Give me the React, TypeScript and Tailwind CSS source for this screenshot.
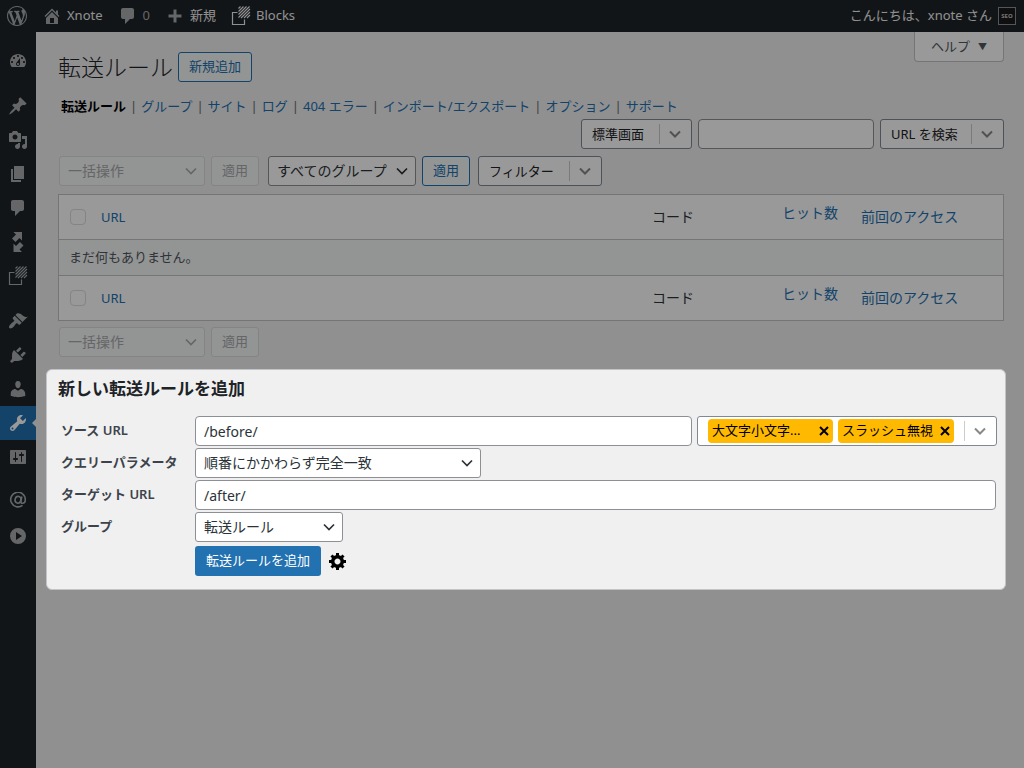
import type { ReactNode } from 'react'

const paths = {
  wordpress:
    'M20 10c0-5.51-4.49-10-10-10C4.48 0 0 4.49 0 10c0 5.52 4.48 10 10 10 5.51 0 10-4.48 10-10zM7.78 15.37L4.37 6.22c.55-.02 1.17-.08 1.17-.08.5-.06.44-1.13-.06-1.11 0 0-1.45.11-2.37.11-.18 0-.37 0-.58-.01C4.12 2.69 6.87 1.11 10 1.11c2.33 0 4.45.87 6.05 2.34-.68-.11-1.65.39-1.65 1.58 0 .74.45 1.36.9 2.1.35.61.55 1.36.55 2.46 0 1.49-1.4 5-1.4 5l-3.03-8.37c.54-.02.82-.17.82-.17.5-.05.44-1.25-.06-1.22 0 0-1.44.12-2.38.12-.87 0-2.33-.12-2.33-.12-.5-.03-.56 1.2-.06 1.22l.92.08 1.26 3.41zM17.41 10c.24-.64.74-1.87.43-4.25.7 1.29 1.05 2.71 1.05 4.25 0 3.29-1.73 6.24-4.4 7.78.97-2.59 1.94-5.2 2.92-7.78zM6.1 18.09C3.12 16.65 1.11 13.53 1.11 10c0-1.3.23-2.48.72-3.59C3.25 10.3 4.67 14.2 6.1 18.09zm4.03-6.63l2.58 6.98c-.86.29-1.76.45-2.71.45-.79 0-1.57-.11-2.29-.33.81-2.38 1.62-4.74 2.42-7.1z',
  home: 'M16 8.5l1.53 1.53-1.06 1.06L10 4.6l-6.47 6.49-1.06-1.06L10 2.5l4 4v-2h2v4zm-6-2.46l6 5.99V18H4v-5.97zM12 17v-5H8v5h4z',
  comments: 'M5 2h9c1.1 0 2 .9 2 2v7c0 1.1-.9 2-2 2h-2l-5 5v-5H5c-1.1 0-2-.9-2-2V4c0-1.1.9-2 2-2z',
  plus: 'M16.5 8.5v3h-5v5h-3v-5h-5v-3h5v-5h3v5z',
  dashboard:
    'M3.76 16h12.48c1.1-1.37 1.76-3.11 1.76-5 0-4.42-3.58-8-8-8s-8 3.58-8 8c0 1.89.66 3.63 1.76 5zM10 4c.55 0 1 .45 1 1s-.45 1-1 1-1-.45-1-1 .45-1 1-1zM6 6c.55 0 1 .45 1 1s-.45 1-1 1-1-.45-1-1 .45-1 1-1zm8 0c.55 0 1 .45 1 1s-.45 1-1 1-1-.45-1-1 .45-1 1-1zm-5.37 5.55L12 7v6c0 1.1-.9 2-2 2s-2-.9-2-2c0-.57.24-1.08.63-1.45zM4 10c.55 0 1 .45 1 1s-.45 1-1 1-1-.45-1-1 .45-1 1-1zm12 0c.55 0 1 .45 1 1s-.45 1-1 1-1-.45-1-1 .45-1 1-1zm-5 3c0-.55-.45-1-1-1s-1 .45-1 1 .45 1 1 1 1-.45 1-1z',
  post: 'M10.44 3.02l1.82-1.82 6.36 6.35-1.83 1.82c-1.05-.68-2.48-.57-3.41.36l-.75.75c-.92.93-1.04 2.35-.35 3.41l-1.83 1.82-2.41-2.41-2.8 2.79c-.42.42-3.38 2.71-3.8 2.29s1.86-3.39 2.28-3.81l2.79-2.79L4.1 9.36l1.83-1.82c1.05.69 2.48.57 3.4-.36l.75-.75c.93-.92 1.05-2.35.36-3.41z',
  media:
    'M13 11V4c0-.55-.45-1-1-1h-1.67L9 1H5L3.67 3H2c-.55 0-1 .45-1 1v7c0 .55.45 1 1 1h10c.55 0 1-.45 1-1zM7 4.5c1.38 0 2.5 1.12 2.5 2.5S8.38 9.5 7 9.5 4.5 8.38 4.5 7 5.62 4.5 7 4.5zM14 6h5v10.5c0 1.38-1.12 2.5-2.5 2.5S14 17.88 14 16.5s1.12-2.5 2.5-2.5c.17 0 .34.02.5.05V9h-3V6zm-4 8.05V13h2v3.5c0 1.38-1.12 2.5-2.5 2.5S7 17.88 7 16.5 8.12 14 9.5 14c.17 0 .34.02.5.05z',
  page: 'M6 15V2h10v13H6zm-1 1h8v2H3V5h2v11z',
  transfer: 'M5.5 0H14v8.5l-2.5-2.5-4 4L4 6.500l4-4zM5.5 20v-8.5L8 14l4-4 3.500 3.500-4 4 2.500 2.500z',
  appearance:
    'M14.48 11.06L7.41 3.99l1.5-1.5c.5-.56 2.3-.47 3.51.32 1.21.8 1.43 1.28 2.91 2.1 1.18.64 2.45 1.26 4.45.85zm-.71.71L6.7 4.7 4.93 6.47c-.39.39-.39 1.02 0 1.41l1.06 1.06c.39.39.39 1.03 0 1.42-.6.6-1.43 1.11-2.21 1.69-.35.26-.7.53-1.01.84C1.43 14.23.4 16.08 1.4 17.07c.99 1 2.84-.03 4.18-1.36.31-.31.58-.66.85-1.02.57-.78 1.08-1.61 1.69-2.21.39-.39 1.02-.39 1.41 0l1.06 1.06c.39.39 1.02.39 1.41 0z',
  plugins:
    'M13.11 4.36L9.87 7.6 8 5.73l3.24-3.24c.35-.34 1.05-.2 1.56.32.52.51.66 1.21.31 1.55zm-8 1.77l.91-1.12 9.01 9.01-1.19.84c-.71.71-2.63 1.16-3.82 1.16H6.14L4.9 17.26c-.59.59-1.54.59-2.12 0-.59-.58-.59-1.53 0-2.12l1.24-1.24v-3.88c0-1.13.4-3.19 1.09-3.89zm7.26 3.97l3.24-3.24c.34-.35 1.04-.21 1.55.31.52.51.66 1.21.31 1.55l-3.24 3.25z',
  users:
    'M10 9.25c-2.27 0-2.73-3.44-2.73-3.44C7 4.02 7.82 2 9.97 2c2.16 0 2.98 2.02 2.71 3.81 0 0-.41 3.44-2.68 3.44zm0 2.57L12.72 10c2.39 0 4.52 2.33 4.52 4.53v2.49s-3.65 1.13-7.24 1.13c-3.65 0-7.24-1.13-7.24-1.13v-2.49c0-2.25 1.94-4.48 4.47-4.48z',
  tools:
    'M16.68 9.77c-1.34 1.34-3.3 1.67-4.95.99l-5.41 6.52c-.99.99-2.59.99-3.58 0s-.99-2.59 0-3.57l6.52-5.42c-.68-1.65-.35-3.61.99-4.95 1.28-1.28 3.12-1.62 4.72-1.06l-2.89 2.89 2.82 2.82 2.86-2.87c.53 1.58.18 3.39-1.08 4.65zM3.81 16.21c.4.39 1.04.39 1.43 0 .4-.4.4-1.04 0-1.43-.39-.4-1.03-.4-1.43 0-.39.39-.39 1.03 0 1.43z',
  settings:
    'M18 16V4c0-.55-.45-1-1-1H3c-.55 0-1 .45-1 1v12c0 .55.45 1 1 1h14c.55 0 1-.45 1-1zM8 11h1c.55 0 1 .45 1 1s-.45 1-1 1H8v1.5c0 .28-.22.5-.5.5s-.5-.22-.5-.5V13H6c-.55 0-1-.45-1-1s.45-1 1-1h1V5.5c0-.28.22-.5.5-.5s.5.22.5.5V11zm5-2h-1c-.55 0-1-.45-1-1s.45-1 1-1h1V5.5c0-.28.22-.5.5-.5s.5.22.5.5V7h1c.55 0 1 .45 1 1s-.45 1-1 1h-1v5.5c0 .28-.22.5-.5.5s-.5-.22-.5-.5V9z',
  collapse: 'M10 2a8 8 0 1 0 0 16a8 8 0 0 0 0-16zM8 6l6 4-6 4z',
  gear: 'M18 12h-2.18c-.17.7-.44 1.35-.81 1.93l1.54 1.54-2.1 2.1-1.54-1.54c-.58.36-1.23.63-1.91.79V19H8v-2.18c-.68-.16-1.33-.43-1.91-.79l-1.54 1.54-2.12-2.12 1.54-1.54c-.36-.58-.63-1.23-.79-1.91H1V9.03h2.17c.16-.7.44-1.35.8-1.94L2.43 5.55l2.1-2.1 1.54 1.54c.58-.37 1.24-.64 1.93-.81V2h3v2.18c.68.16 1.33.43 1.91.79l1.54-1.54 2.12 2.12-1.54 1.54c.36.59.64 1.24.8 1.94H18V12zm-8.5 1.5c1.66 0 3-1.34 3-3s-1.34-3-3-3-3 1.34-3 3 1.34 3 3 3z',
}

type IconName = keyof typeof paths

const Icon = ({ name, className = 'size-5' }: { name: IconName; className?: string }) => {
  return (
    <svg viewBox="0 0 20 20" className={className} fill="currentColor" fillRule="evenodd" aria-hidden="true">
      <path d={paths[name]} />
    </svg>
  )
}

const BlocksIcon = () => {
  return (
    <svg viewBox="0 0 20 20" className="size-5" fill="none" stroke="currentColor" aria-hidden="true">
      <path d="M6.5 6.5h-5v12h12v-5" strokeWidth="1.2" />
      <path
        d="M7.5 2.5l2-2M7.5 5.5l5-5M7.5 8.5l8-8M7.5 11.5l11-11M10 12l9-9M13 12l6-6M16 12l3-3"
        strokeWidth="1.1"
      />
    </svg>
  )
}

const AtIcon = () => {
  return (
    <svg viewBox="0 0 20 20" className="size-5" fill="none" stroke="currentColor" strokeWidth="1.6" aria-hidden="true">
      <path d="M14.5 13.3A7.3 7.3 0 1 1 17.3 7.500c0 2.400-1.300 3.800-2.900 3.800-1.200 0-1.700-.8-1.400-2.200L13.800 4.500" />
      <ellipse cx="10" cy="7.8" rx="2.9" ry="3.400" transform="rotate(15 10 7.8)" />
    </svg>
  )
}

const Chevron = ({ className }: { className?: string }) => {
  return (
    <svg
      viewBox="0 0 16 16"
      className={`pointer-events-none absolute size-4 ${className ?? ''}`}
      fill="none"
      stroke="currentColor"
      aria-hidden="true"
    >
      <path d="M3 5.5l5 5 5-5" />
    </svg>
  )
}

interface SelectProps {
  id?: string
  label?: string
  value: string
  className: string
  disabled?: boolean
}

const Select = ({ id, label, value, className, disabled }: SelectProps) => {
  return (
    <div className={`relative ${className} ${disabled ? 'text-[#a7aaad]' : 'text-[#2c3338]'}`}>
      <select
        id={id}
        aria-label={label}
        disabled={disabled}
        className="h-[30px] w-full appearance-none rounded-[3px] border border-[#8c8f94] bg-white pl-2 pr-6 text-sm leading-7 disabled:border-[#dcdcde] disabled:bg-[#f6f7f7] disabled:opacity-100"
      >
        <option>{value}</option>
      </select>
      <Chevron className="right-1.5 top-[7px] stroke-[1.7]" />
    </div>
  )
}

// dropdown with a divider before the arrow
const SplitSelect = ({ label, value, className }: SelectProps) => {
  return (
    <div className={`relative ${className}`}>
      <select
        aria-label={label}
        className="h-[30px] w-full appearance-none rounded-[3px] border border-[#7e8993] bg-white pl-2.5 pr-9 text-[13px] leading-7"
      >
        <option>{value}</option>
      </select>
      <span className="pointer-events-none absolute right-8 top-[5px] h-5 w-px bg-[#cccccc]" />
      <Chevron className="right-[9px] top-[7px] stroke-2 text-[#888888]" />
    </div>
  )
}

const Button = ({ children, disabled }: { children: ReactNode; disabled?: boolean }) => {
  return (
    <button
      type="button"
      disabled={disabled}
      className="h-[30px] whitespace-nowrap rounded-[3px] border border-[#2271b1] bg-[#f6f7f7] px-2.5 text-[13px] text-[#2271b1] disabled:border-[#dcdcde] disabled:text-[#a7aaad]"
    >
      {children}
    </button>
  )
}

const MenuItem = ({ label, active, children }: { label: string; active?: boolean; children: ReactNode }) => {
  return (
    <a
      href="#"
      aria-label={label}
      className={`relative flex h-[34px] items-center justify-center ${active ? 'bg-[#2271b1] text-white' : 'text-[#a7aaad]'}`}
    >
      {children}
      {active && (
        <span className="absolute right-0 top-[13px] border-y-4 border-r-4 border-y-transparent border-r-[#f0f0f1]" />
      )}
    </a>
  )
}

const SideMenu = () => {
  return (
    <nav className="flex w-9 shrink-0 flex-col bg-[#1d2327] pt-3">
      <MenuItem label="ダッシュボード"><Icon name="dashboard" /></MenuItem>
      <div className="mt-[11px]">
        <MenuItem label="投稿"><Icon name="post" /></MenuItem>
        <MenuItem label="メディア"><Icon name="media" /></MenuItem>
        <MenuItem label="固定ページ"><Icon name="page" /></MenuItem>
        <MenuItem label="コメント"><Icon name="comments" /></MenuItem>
        <MenuItem label="転送"><Icon name="transfer" /></MenuItem>
        <MenuItem label="Blocks"><BlocksIcon /></MenuItem>
      </div>
      <div className="mt-[11px]">
        <MenuItem label="外観"><Icon name="appearance" /></MenuItem>
        <MenuItem label="プラグイン"><Icon name="plugins" /></MenuItem>
        <MenuItem label="ユーザー"><Icon name="users" /></MenuItem>
        <MenuItem label="ツール" active><Icon name="tools" /></MenuItem>
        <MenuItem label="設定"><Icon name="settings" /></MenuItem>
      </div>
      <div className="mt-[11px]">
        <MenuItem label="メール"><AtIcon /></MenuItem>
        <MenuItem label="メニューを閉じる"><Icon name="collapse" /></MenuItem>
      </div>
    </nav>
  )
}

const AdminBar = () => {
  return (
    <header className="flex h-8 items-center justify-between bg-[#1d2327] pl-[7px] pr-2 text-[13px] text-[#f0f0f1]">
      <div className="flex items-center gap-[15px]">
        <a href="#" aria-label="WordPress" className="text-[#a7aaad]"><Icon name="wordpress" /></a>
        <a href="#" className="flex items-center gap-[5px]">
          <Icon name="home" className="size-5 text-[#a7aaad]" />
          Xnote
        </a>
        <a href="#" className="flex items-center gap-[5px] text-[#a7aaad]">
          <Icon name="comments" />
          0
        </a>
        <a href="#" className="flex items-center gap-[5px]">
          <Icon name="plus" className="size-5 text-[#a7aaad]" />
          新規
        </a>
        <a href="#" className="flex items-center gap-[5px]">
          <BlocksIcon />
          Blocks
        </a>
      </div>
      <a href="#" className="flex items-center gap-1.5">
        こんにちは、xnote さん
        <span className="flex size-[18px] items-center justify-center border border-[#8c8f94] bg-[#1a1a1a] text-[6px] font-bold text-[#c3c4c7]">
          SEO
        </span>
      </a>
    </header>
  )
}

const links = ['グループ', 'サイト', 'ログ', '404 エラー', 'インポート/エクスポート', 'オプション', 'サポート']

const HeadingRow = () => {
  return (
    <tr className="h-11 bg-white text-left text-sm text-[#2271b1]">
      <th className="pl-[11px]">
        <input
          type="checkbox"
          disabled
          aria-label="すべて選択"
          className="block size-4 appearance-none rounded-[4px] border border-[#dcdcde] bg-white"
        />
      </th>
      <th className="px-2 font-normal"><a href="#" className="text-[13px]">URL</a></th>
      <th className="px-2 font-normal text-[#2c3338]">コード</th>
      <th className="px-2 pb-2 font-normal"><a href="#">ヒット数</a></th>
      <th className="px-2 font-normal"><a href="#">前回のアクセス</a></th>
    </tr>
  )
}

const RedirectTable = () => {
  return (
    <div className="mt-2 border border-[#c3c4c7]">
      <table className="w-full table-fixed border-separate border-spacing-0">
        <colgroup>
          <col className="w-[34px]" />
          <col />
          <col className="w-[130px]" />
          <col className="w-[79px]" />
          <col className="w-[150px]" />
        </colgroup>
        <thead>
          <HeadingRow />
        </thead>
        <tbody>
          <tr className="h-[37px] bg-[#f6f7f7]">
            <td colSpan={5} className="border-y border-[#c3c4c7] px-2.5 text-[13px] text-[#50575e]">
              まだ何もありません。
            </td>
          </tr>
        </tbody>
        <tfoot>
          <HeadingRow />
        </tfoot>
      </table>
    </div>
  )
}

const Tag = ({ label, className }: { label: string; className: string }) => {
  return (
    <span className={`flex h-6 items-center justify-between rounded-sm bg-[#ffb900] px-1 text-[13px] text-black ${className}`}>
      {label}
      <button type="button" aria-label={`${label} を削除`}>
        <svg viewBox="0 0 10 10" className="size-2.5" stroke="currentColor" strokeWidth="2" aria-hidden="true">
          <path d="M1 1l8 8M9 1l-8 8" />
        </svg>
      </button>
    </span>
  )
}

const inputClass = 'h-[30px] min-w-0 rounded-[4px] border border-[#8c8f94] bg-white px-2 text-sm text-[#2c3338]'

const labelClass = 'font-semibold text-[#3c434a]'

const AddRedirect = () => {
  return (
    <section className="relative z-20 -ml-3 -mr-0.5 mt-3 rounded-md border border-[#c3c4c7] bg-[#f0f0f1] pb-[13px] pl-[11px] pr-[9px] pt-2">
      <h2 className="text-[17px] font-bold leading-[22px]">新しい転送ルールを追加</h2>
      <form className="ml-[3px] mt-4 grid grid-cols-[134px_minmax(0,1fr)] items-center gap-y-0.5 text-[13px]">
        <label htmlFor="source" className={labelClass}>ソース URL</label>
        <div className="-mr-px flex gap-[5px]">
          <input id="source" defaultValue="/before/" className={`${inputClass} flex-1`} />
          <div className="relative flex h-[30px] w-[300px] items-center gap-[5px] rounded-[3px] border border-[#7e8993] bg-white pl-2.5">
            <Tag label="大文字小文字..." className="w-[125px]" />
            <Tag label="スラッシュ無視" className="w-[116px]" />
            <span className="absolute right-[31px] h-5 w-px bg-[#cccccc]" />
            <button type="button" aria-label="オプションを開く" className="absolute right-2 size-4 text-[#888888]">
              <Chevron className="inset-0 stroke-2" />
            </button>
          </div>
        </div>
        <label htmlFor="query" className={labelClass}>クエリーパラメータ</label>
        <Select id="query" value="順番にかかわらず完全一致" className="w-[286px]" />
        <label htmlFor="target" className={labelClass}>ターゲット URL</label>
        <input id="target" defaultValue="/after/" className={inputClass} />
        <label htmlFor="group" className={labelClass}>グループ</label>
        <Select id="group" value="転送ルール" className="w-[148px]" />
        <div className="col-start-2 mt-0.5 flex items-center gap-[7px]">
          <button type="submit" className="h-[30px] rounded-[3px] bg-[#2271b1] px-[11px] text-white">
            転送ルールを追加
          </button>
          <button type="button" aria-label="詳細設定" className="text-black">
            <Icon name="gear" />
          </button>
        </div>
      </form>
    </section>
  )
}

export default function App() {
  return (
    <div className="relative flex min-h-screen flex-col bg-[#f0f0f1] font-['Noto_Sans','Noto_Sans_CJK_JP',sans-serif] text-[13px] text-[#1d2327]">
      <AdminBar />
      <div className="flex flex-1">
        <SideMenu />
        <main className="min-w-0 flex-1 pb-8 pl-[22px] pr-5">
          <div className="flex items-start justify-between">
            <div className="flex items-center gap-[5px] pt-5">
              <h1 className="text-[23px] font-light leading-[30px]">転送ルール</h1>
              <Button>新規追加</Button>
            </div>
            <button
              type="button"
              className="flex h-[30px] items-center gap-2 rounded-b-[4px] border border-t-0 border-[#c3c4c7] bg-white px-4 text-[#50575e]"
            >
              ヘルプ
              <span className="text-[9px]">▼</span>
            </button>
          </div>

          <ul className="ml-[3px] mt-3 flex gap-1 leading-6">
            <li><a href="#" className="font-semibold text-black">転送ルール</a></li>
            {links.map((link) => (
              <li key={link} className="flex gap-1">
                <span className="text-[#646970]">|</span>
                <a href="#" className="text-[#2271b1]">{link}</a>
              </li>
            ))}
          </ul>

          <div className="mt-px flex justify-end gap-1.5">
            <SplitSelect label="表示" value="標準画面" className="w-[111px]" />
            <input type="search" aria-label="検索" className={`${inputClass} w-44`} />
            <SplitSelect label="検索対象" value="URL を検索" className="w-[124px]" />
          </div>

          <div className="ml-px mt-[7px] flex">
            <div className="flex gap-1.5">
              <Select label="一括操作" value="一括操作" className="w-[146px]" disabled />
              <Button disabled>適用</Button>
            </div>
            <div className="ml-[9px] flex gap-1.5">
              <Select label="グループ" value="すべてのグループ" className="w-[148px]" />
              <Button>適用</Button>
            </div>
            <SplitSelect label="フィルター" value="フィルター" className="ml-2 w-[124px]" />
          </div>

          <RedirectTable />

          <div className="ml-px mt-1.5 flex gap-1.5">
            <Select label="一括操作" value="一括操作" className="w-[146px]" disabled />
            <Button disabled>適用</Button>
          </div>

          <AddRedirect />
        </main>
      </div>
      <div className="pointer-events-none absolute inset-0 z-10 bg-black/40" />
    </div>
  )
}
